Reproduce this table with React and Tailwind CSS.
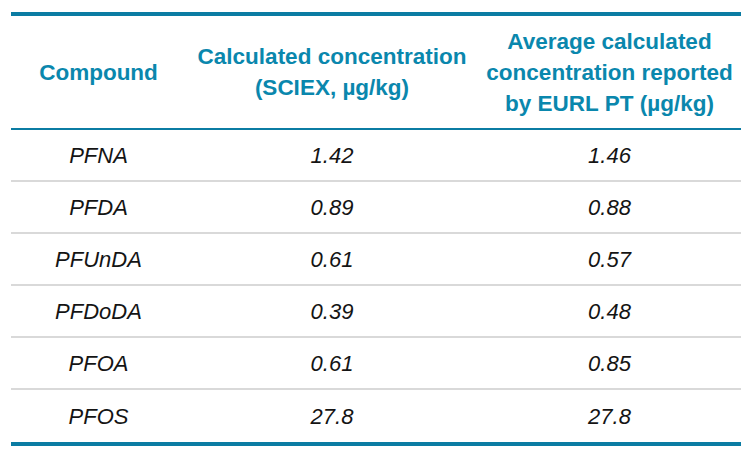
import React from "react";

const rows = [
  ["PFNA", "1.42", "1.46"],
  ["PFDA", "0.89", "0.88"],
  ["PFUnDA", "0.61", "0.57"],
  ["PFDoDA", "0.39", "0.48"],
  ["PFOA", "0.61", "0.85"],
  ["PFOS", "27.8", "27.8"],
];

export default function App() {
  return (
    <div
      className="w-[750px] h-[461px] bg-white pt-[12px] pl-[11px]"
      style={{ fontFamily: '"Liberation Sans", Arial, sans-serif' }}
    >
      <div className="w-[730px] border-t-4 border-b-4 border-[#0b7ca3]">
        <div className="grid grid-cols-[175px_292px_263px] h-[114px] border-b-2 border-[#0b7ca3] items-center text-center font-bold text-[22.5px] leading-[31px] text-[#0a87ad]">
          <div>Compound</div>
          <div>
            Calculated concentration
            <br />
            (SCIEX, µg/kg)
          </div>
          <div>
            Average calculated
            <br />
            concentration reported
            <br />
            by EURL PT (µg/kg)
          </div>
        </div>
        {rows.map((r, i) => (
          <div
            key={i}
            className={
              "grid grid-cols-[175px_292px_263px] h-[52px] items-center text-center italic text-[22px] text-[#141414] " +
              (i < rows.length - 1 ? "border-b-2 border-[#d9d9d9]" : "")
            }
          >
            <div>{r[0]}</div>
            <div>{r[1]}</div>
            <div>{r[2]}</div>
          </div>
        ))}
      </div>
    </div>
  );
}
